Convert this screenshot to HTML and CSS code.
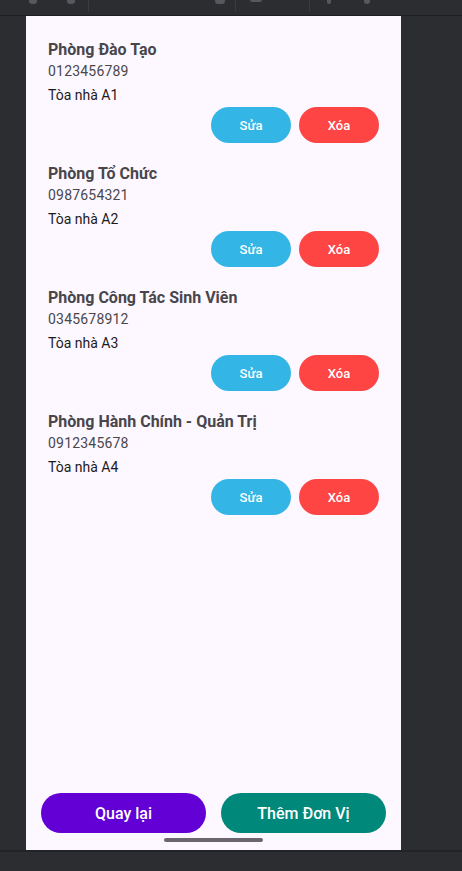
FILE: index.html
```html
<!DOCTYPE html>
<html lang="vi">
<head>
<meta charset="utf-8">
<title>Đơn vị</title>
<link rel="stylesheet" href="styles.css">
</head>
<body>
<div class="toolbar">
  <span class="tb-icon i1"></span>
  <span class="tb-icon i2"></span>
  <span class="tb-sep s1"></span>
  <span class="tb-icon i3"></span>
  <span class="tb-sep s2"></span>
  <span class="tb-icon i4"></span>
  <span class="tb-sep s3"></span>
  <span class="tb-icon i5"></span>
  <span class="tb-icon i6"></span>
</div>
<div class="stage">
  <div class="screen">
    <div class="list">
      <div class="item">
        <div class="name">Phòng Đào Tạo</div>
        <div class="phone">0123456789</div>
        <div class="addr">Tòa nhà A1</div>
        <div class="actions"><button class="btn edit">Sửa</button><button class="btn del">Xóa</button></div>
      </div>
      <div class="item">
        <div class="name">Phòng Tổ Chức</div>
        <div class="phone">0987654321</div>
        <div class="addr">Tòa nhà A2</div>
        <div class="actions"><button class="btn edit">Sửa</button><button class="btn del">Xóa</button></div>
      </div>
      <div class="item">
        <div class="name">Phòng Công Tác Sinh Viên</div>
        <div class="phone">0345678912</div>
        <div class="addr">Tòa nhà A3</div>
        <div class="actions"><button class="btn edit">Sửa</button><button class="btn del">Xóa</button></div>
      </div>
      <div class="item">
        <div class="name">Phòng Hành Chính - Quản Trị</div>
        <div class="phone">0912345678</div>
        <div class="addr">Tòa nhà A4</div>
        <div class="actions"><button class="btn edit">Sửa</button><button class="btn del">Xóa</button></div>
      </div>
    </div>
    <div class="footer">
      <button class="big back">Quay lại</button>
      <button class="big add">Thêm Đơn Vị</button>
    </div>
    <div class="home"><span class="home-bar"></span></div>
  </div>
</div>
<div class="bottombar"></div>
</body>
</html>
```
FILE: styles.css
```css
* { box-sizing: border-box; }
html, body { margin: 0; padding: 0; }
body {
  background: #2b2d30;
  width: 462px;
  height: 871px;
  overflow: hidden;
  font-family: Roboto, "Noto Sans", sans-serif;
}
.toolbar {
  height: 16px;
  border-bottom: 1px solid #1f2023;
  position: relative;
}
.tb-icon {
  position: absolute;
  top: 0;
  height: 4px;
  width: 8px;
  border-radius: 0 0 3px 3px;
  background: #55585c;
}
.i1 { left: 29px; }
.i2 { left: 67px; }
.i3 { left: 215px; width: 10px; }
.i4 { left: 250px; width: 12px; height: 2px; }
.i5 { left: 327px; width: 4px; }
.i6 { left: 364px; width: 6px; }
.tb-sep {
  position: absolute;
  top: 0;
  width: 1px;
  height: 12px;
  background: #3a3c40;
}
.s1 { left: 88px; }
.s2 { left: 235px; }
.s3 { left: 309px; }
.stage {
  height: 834px;
  padding-left: 26px;
}
.screen {
  width: 375px;
  height: 834px;
  background: #fdf7ff;
  display: flex;
  flex-direction: column;
}
.list {
  flex: 1;
  padding: 24px 22px 0 22px;
  display: flex;
  flex-direction: column;
  gap: 21px;
}
.item {
  display: flex;
  flex-direction: column;
}
.name {
  font-size: 16px;
  font-weight: 700;
  line-height: 20px;
  height: 20px;
  color: #48464b;
}
.phone {
  margin-top: 2px;
  font-size: 14px;
  line-height: 18px;
  color: #49474c;
  letter-spacing: 0.2px;
}
.addr {
  margin-top: 6px;
  font-size: 14px;
  line-height: 18px;
  color: #1d1b20;
}
.actions {
  margin-top: 3px;
  display: flex;
  justify-content: flex-end;
  gap: 8px;
}
.btn {
  width: 80px;
  height: 36px;
  border: none;
  border-radius: 18px;
  color: #fff;
  font-family: Roboto, "Noto Sans", sans-serif;
  font-size: 13px;
  font-weight: 500;
  padding: 0;
}
.edit { background: #33b5e5; }
.del { background: #ff4444; }
.footer {
  display: flex;
  gap: 15px;
  padding: 0 15px;
}
.big {
  flex: 1;
  height: 40px;
  border: none;
  border-radius: 20px;
  color: #fff;
  font-family: Roboto, "Noto Sans", sans-serif;
  font-size: 16px;
  font-weight: 500;
  padding: 0;
}
.back { background: #6200d6; }
.add { background: #00887a; }
.home {
  height: 17px;
  display: flex;
  justify-content: center;
  padding-top: 5px;
}
.home-bar {
  width: 99px;
  height: 4px;
  border-radius: 2px;
  background: #6b666e;
}
.bottombar {
  height: 21px;
  border-top: 2px solid #222326;
  background: #2b2d30;
}
```
